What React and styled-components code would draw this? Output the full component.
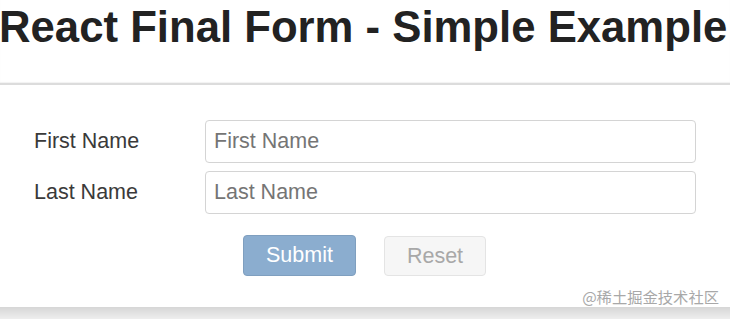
import styled, { createGlobalStyle } from 'styled-components';

const GlobalStyle = createGlobalStyle`
  html, body {
    margin: 0;
    padding: 0;
    background: #fff;
    font-family: "Liberation Sans", Arial, sans-serif;
  }
`;

const App = () => {
  return (
    <Page>
      <GlobalStyle />
      <Title>React Final Form - Simple Example</Title>
      <Panel>
        <Form onSubmit={(e) => e.preventDefault()}>
          <Row>
            <Label>First Name</Label>
            <Input type="text" placeholder="First Name" />
          </Row>
          <Row>
            <Label>Last Name</Label>
            <Input type="text" placeholder="Last Name" />
          </Row>
          <Buttons>
            <Button type="submit" primary>Submit</Button>
            <Button type="button" disabled>Reset</Button>
          </Buttons>
        </Form>
        <Watermark>@稀土掘金技术社区</Watermark>
      </Panel>
      <BottomBar />
    </Page>
  );
};

export default App;

const Page = styled.div`
  width: 730px;
  height: 319px;
  overflow: hidden;
  display: flex;
  flex-direction: column;
`

const Title = styled.h1`
  margin: 0;
  padding: 5px 0 0 0;
  height: 85px;
  flex-shrink: 0;
  box-sizing: border-box;
  font-size: 43.7px;
  line-height: 1;
  font-weight: bold;
  text-indent: -1px;
  color: #222;
  white-space: nowrap;
  border-bottom: 2px solid #dcdcdc;
  box-shadow: 0 -1px 1px #f2f2f2 inset;
`

const Panel = styled.div`
  flex: 1;
  display: flex;
  flex-direction: column;
`

const Form = styled.form`
  padding: 35px 0 0 34px;
  display: flex;
  flex-direction: column;
  gap: 8px;
`

const Row = styled.div`
  display: flex;
  align-items: center;
  height: 43px;
`

const Label = styled.label`
  width: 171px;
  font-size: 21.5px;
  color: #3a3a3a;
`

const Input = styled.input`
  width: 491px;
  height: 43px;
  box-sizing: border-box;
  border: 1px solid #d4d4d4;
  border-radius: 4px;
  padding: 0 8px;
  font-family: "Liberation Sans", Arial, sans-serif;
  font-size: 21.5px;
  color: #333;
  outline: none;

  &::placeholder {
    color: #757575;
  }
`

const Buttons = styled.div`
  display: flex;
  gap: 28px;
  margin-top: 13px;
  padding-left: 209px;
`

const Button = styled.button`
  width: ${(p) => (p.primary ? '113px' : '102px')};
  height: ${(p) => (p.primary ? '41px' : '40px')};
  margin-top: ${(p) => (p.primary ? '0' : '1px')};
  border-radius: 4px;
  font-family: "Liberation Sans", Arial, sans-serif;
  font-size: 21.5px;
  background: ${(p) => (p.primary ? '#8badcf' : '#f6f6f6')};
  border: 1px solid ${(p) => (p.primary ? '#7f9fbf' : '#e4e4e4')};
  color: ${(p) => (p.primary ? '#fff' : '#a8a8a8')};
  cursor: pointer;

  &:disabled {
    cursor: default;
  }
`

const Watermark = styled.div`
  align-self: flex-end;
  margin: auto 11px 2px 0;
  font-family: "Noto Sans CJK SC", sans-serif;
  font-size: 15.3px;
  line-height: 18px;
  color: #a8a8a8;
`

const BottomBar = styled.div`
  height: 12px;
  flex-shrink: 0;
  background: linear-gradient(#d6d6d6, #eeeeee);
`
